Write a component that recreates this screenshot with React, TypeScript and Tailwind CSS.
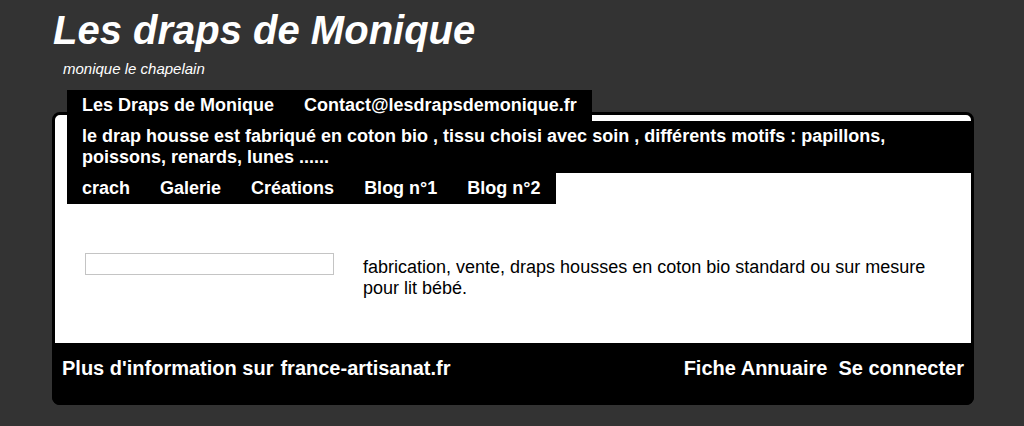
import React from "react";

export default function App() {
  const topNav = ["Les Draps de Monique", "Contact@lesdrapsdemonique.fr"];
  const bottomNav = ["crach", "Galerie", "Créations", "Blog n°1", "Blog n°2"];
  return (
    <div className="min-h-[426px] bg-[#333333] font-['Liberation_Sans',Arial,sans-serif] text-white overflow-hidden">
      <h1 className="pt-[7px] pl-[53px] text-[40px] leading-[46px] font-bold italic">
        Les draps de Monique
      </h1>
      <p className="mt-[7px] pl-[63px] text-[15px] leading-[17px] italic">
        monique le chapelain
      </p>
      <div className="mt-[35px] ml-[52px] w-[922px] border-[3px] border-black rounded-[8px] bg-white">
        <div className="pl-[12px]">
          <nav className="-mt-[25px] flex w-fit bg-black">
            {topNav.map((t) => (
              <span key={t} className="px-[15px] text-[18px] leading-[31px] font-bold">
                {t}
              </span>
            ))}
          </nav>
          <div className="bg-black px-[15px] py-[5px] text-[18px] leading-[21px] font-bold">
            le drap housse est fabriqué en coton bio , tissu choisi avec soin , différents motifs : papillons, poissons, renards, lunes ......
          </div>
          <nav className="flex w-fit bg-black">
            {bottomNav.map((t) => (
              <span key={t} className="px-[15px] text-[18px] leading-[31px] font-bold">
                {t}
              </span>
            ))}
          </nav>
          <div className="flex h-[139px] items-start">
            <div className="mt-[49px] ml-[18px] h-[22px] w-[249px] border border-[#c4c4c4] bg-white" />
            <p className="mt-[53px] ml-[29px] w-[580px] text-[18px] leading-[21px] text-black">
              fabrication, vente, draps housses en coton bio standard ou sur mesure pour lit bébé.
            </p>
          </div>
        </div>
        <footer className="-mx-[3px] -mb-[3px] flex h-[62px] justify-between rounded-b-[8px] bg-black px-[10px] pt-[14px] text-[20px] leading-[23px] font-bold">
          <div className="flex gap-[7px]">
            <span>Plus d'information sur</span>
            <span>france-artisanat.fr</span>
          </div>
          <div className="flex gap-[11px]">
            <span>Fiche Annuaire</span>
            <span>Se connecter</span>
          </div>
        </footer>
      </div>
    </div>
  );
}
